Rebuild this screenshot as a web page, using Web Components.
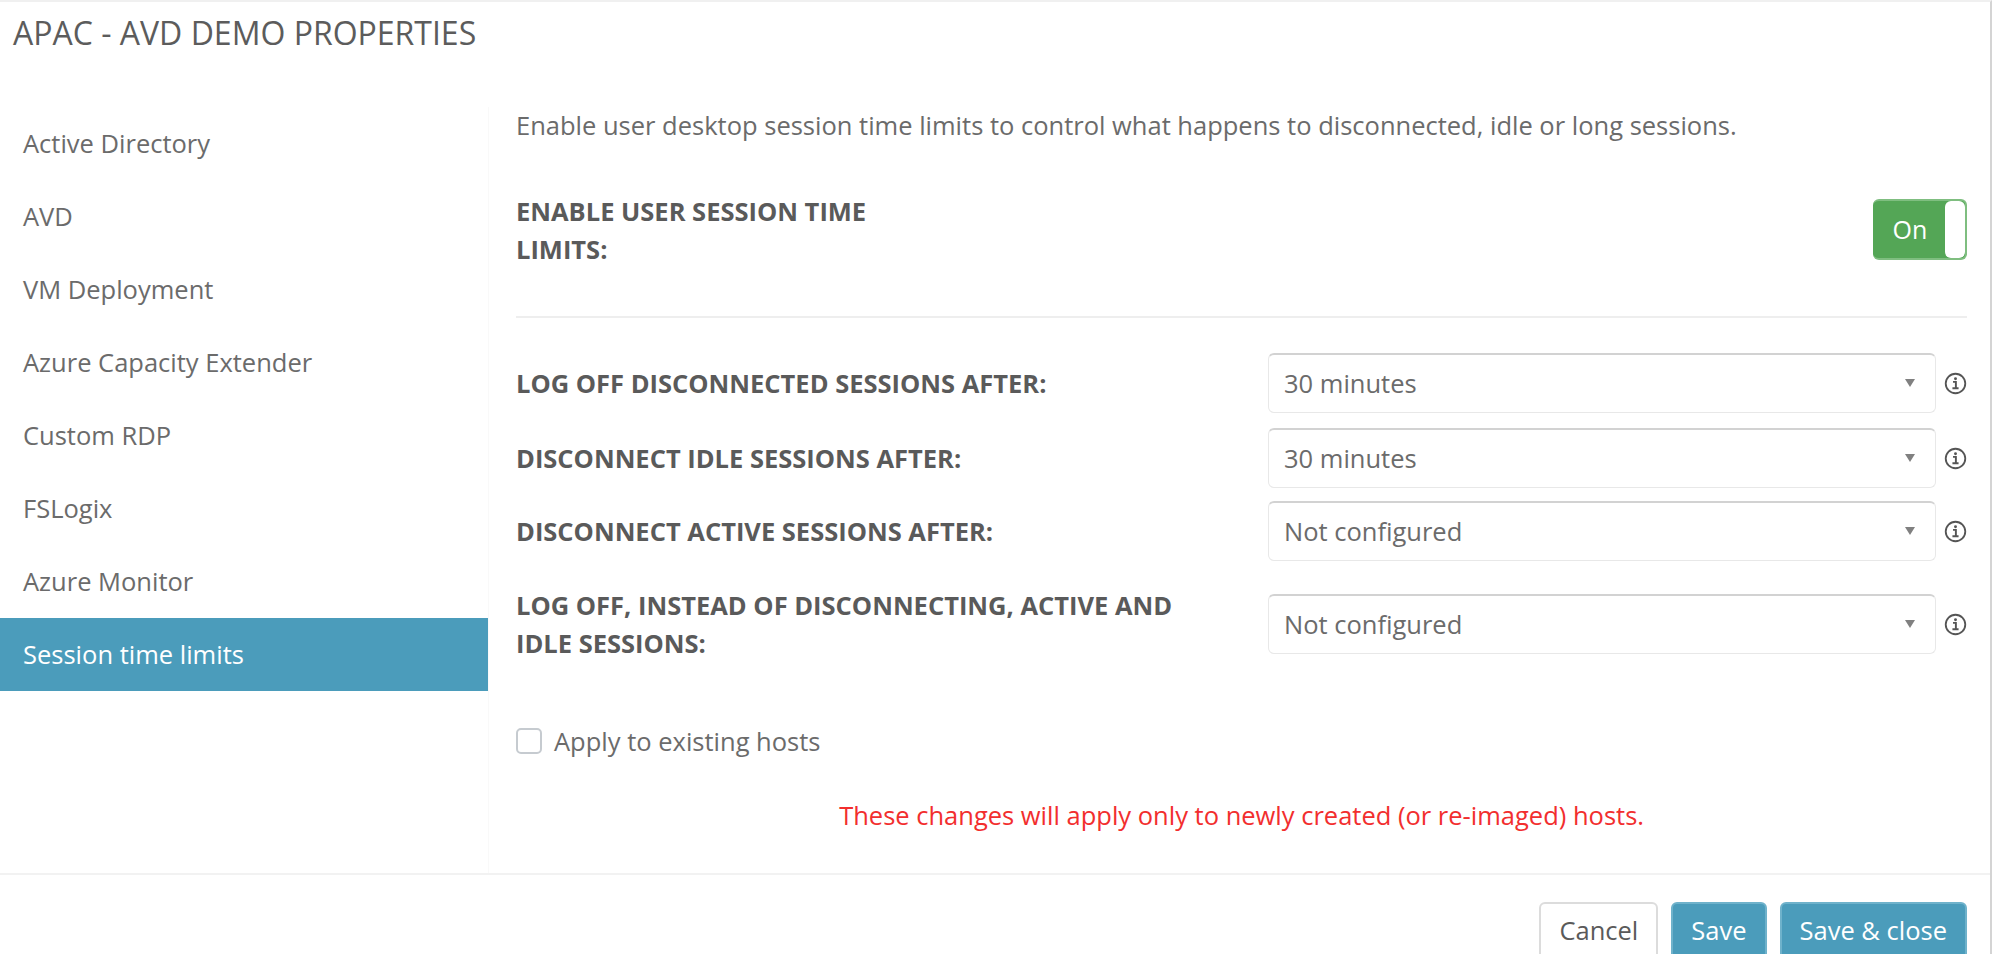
<!DOCTYPE html>
<html>
<head>
<meta charset="utf-8">
<title>APAC - AVD Demo Properties</title>
<style>
    html, body { margin: 0; height: 954px; overflow: hidden; background: #fff; }
    body { font-family: "Open Sans", "Liberation Sans", sans-serif; color: #666; }
</style>
</head>
<body>
<properties-dialog title-text="APAC - AVD Demo Properties">
    <side-nav slot="nav">
        <nav-item>Active Directory</nav-item>
        <nav-item>AVD</nav-item>
        <nav-item>VM Deployment</nav-item>
        <nav-item>Azure Capacity Extender</nav-item>
        <nav-item>Custom RDP</nav-item>
        <nav-item>FSLogix</nav-item>
        <nav-item>Azure Monitor</nav-item>
        <nav-item active>Session time limits</nav-item>
    </side-nav>

    <p-intro>Enable user desktop session time limits to control what happens to disconnected, idle or long sessions.</p-intro>

    <toggle-row>ENABLE USER SESSION TIME<br>LIMITS:</toggle-row>

    <select-row value="30 minutes" style="margin-top:35px">Log off disconnected sessions after:</select-row>
    <select-row value="30 minutes" style="margin-top:15px">Disconnect idle sessions after:</select-row>
    <select-row value="Not configured" style="margin-top:13px">Disconnect active sessions after:</select-row>
    <select-row value="Not configured" style="margin-top:25px">Log off, instead of disconnecting, active and<br>idle sessions:</select-row>

    <check-box>Apply to existing hosts</check-box>
    <warn-note>These changes will apply only to newly created (or re-imaged) hosts.</warn-note>

    <dialog-button slot="footer">Cancel</dialog-button>
    <dialog-button slot="footer" primary>Save</dialog-button>
    <dialog-button slot="footer" primary>Save &amp; close</dialog-button>
</properties-dialog>

<script>
    class PropertiesDialog extends HTMLElement{
        constructor(){
            super();
            this.attachShadow({mode: 'open'});
            this.shadowRoot.innerHTML = '<style>\n'+
            ':host { display: flex; flex-direction: column; height: 954px; box-sizing: border-box; border-top: 2px solid #f0f0f0; border-right: 2px solid #d4d4d4; overflow: hidden; }'+
            '.title { flex: none; margin: 0; height: 105px; box-sizing: border-box; padding: 11px 0 0 13px; font-size: 32px; line-height: 40px; font-weight: 400; text-transform: uppercase; color: #5c5c5c; }'+
            '.body { display: flex; height: 766px; flex: none; }'+
            '.main { flex: 1; min-width: 0; box-sizing: border-box; padding: 0 23px 0 27px; border-left: 1px solid #f9f9f9; }'+
            '.footer { flex: none; display: flex; justify-content: flex-end; gap: 13px; padding: 27px 23px 0 0; border-top: 2px solid #f2f2f2; }'+
            '</style>'+
            '<h1 class="title"></h1>'+
            '<div class="body"><slot name="nav"></slot><div class="main"><slot></slot></div></div>'+
            '<div class="footer"><slot name="footer"></slot></div>';
            this.shadowRoot.querySelector('.title').textContent = this.getAttribute('title-text');
        }
    }
    window.customElements.define('properties-dialog', PropertiesDialog);

    class SideNav extends HTMLElement{
        constructor(){
            super();
            this.attachShadow({mode: 'open'});
            this.shadowRoot.innerHTML = '<style>:host { display: block; flex: none; width: 488px; }</style><slot></slot>';
        }
    }
    window.customElements.define('side-nav', SideNav);

    class NavItem extends HTMLElement{
        constructor(){
            super();
            this.attachShadow({mode: 'open'});
            this.shadowRoot.innerHTML = '<style>\n'+
            ':host { display: flex; align-items: center; height: 73px; box-sizing: border-box; padding: 0 0 2px 23px; font-size: 25.5px; color: #6b6b6b; }'+
            ':host([active]) { background: #4b9cbb; color: #fff; }'+
            '</style><slot></slot>';
        }
    }
    window.customElements.define('nav-item', NavItem);

    class PIntro extends HTMLElement{
        constructor(){
            super();
            this.attachShadow({mode: 'open'});
            this.shadowRoot.innerHTML = '<style>:host { display: block; height: 89px; font-size: 25.5px; line-height: 34px; padding-top: 1px; color: #6b6b6b; box-sizing: border-box; }</style><slot></slot>';
        }
    }
    window.customElements.define('p-intro', PIntro);

    class ToggleRow extends HTMLElement{
        constructor(){
            super();
            this.attachShadow({mode: 'open'});
            this.shadowRoot.innerHTML = '<style>\n'+
            ':host { display: flex; justify-content: space-between; align-items: flex-start; height: 122px; box-sizing: border-box; padding-top: 3px; border-bottom: 2px solid #eee; }'+
            '.label { font-size: 25.5px; line-height: 38px; font-weight: 700; color: #5a5a5a; margin-top: -7px; }'+
            '.switch { display: flex; width: 94px; height: 61px; box-sizing: border-box; border-radius: 6px; background: #54a656; border: 2px solid #7fbe80; border-left: 0; overflow: hidden; }'+
            '.on { flex: 1; display: flex; align-items: center; justify-content: center; padding: 0 0 2px 2px; color: #fff; font-size: 25px; }'+
            '.knob { width: 20px; background: #fff; border-radius: 6px; }'+
            '</style>'+
            '<div class="label"><slot></slot></div>'+
            '<div class="switch"><span class="on">On</span><span class="knob"></span></div>';
        }
    }
    window.customElements.define('toggle-row', ToggleRow);

    class SelectRow extends HTMLElement{
        constructor(){
            super();
            this.attachShadow({mode: 'open'});
            this.shadowRoot.innerHTML = '<style>\n'+
            ':host { display: flex; align-items: center; }'+
            '.label { flex: none; width: 752px; font-size: 25.5px; line-height: 38px; font-weight: 700; text-transform: uppercase; color: #5a5a5a; }'+
            '.select { flex: none; width: 668px; height: 60px; box-sizing: border-box; display: flex; align-items: center; justify-content: space-between; padding: 0 20px 2px 15px; border: 1px solid #e8e8e8; border-top: 2px solid #d2d2d2; border-radius: 6px; font-size: 25.5px; color: #6b6b6b; }'+
            '.arrow { width: 0; height: 0; border-left: 5px solid transparent; border-right: 5px solid transparent; border-top: 8px solid #808080; }'+
            'svg { flex: none; margin-left: 8px; width: 23px; height: 23px; }'+
            '</style>'+
            '<div class="label"><slot></slot></div>'+
            '<div class="select"><span class="val"></span><span class="arrow"></span></div>'+
            '<svg viewBox="0 0 24 24" fill="none" stroke="#555"><circle cx="12" cy="12" r="10.2" stroke-width="1.9"/><path d="M9.4 10.3h3v6.6M8.8 17h6.4" stroke-width="2"/><circle cx="12" cy="7" r="1.5" fill="#555" stroke="none"/></svg>';
            this.shadowRoot.querySelector('.val').textContent = this.getAttribute('value');
        }
    }
    window.customElements.define('select-row', SelectRow);

    class CheckBox extends HTMLElement{
        constructor(){
            super();
            this.attachShadow({mode: 'open'});
            this.shadowRoot.innerHTML = '<style>\n'+
            ':host { display: flex; align-items: center; gap: 12px; margin-top: 66px; height: 26px; font-size: 25.5px; color: #6b6b6b; }'+
            '.box { flex: none; width: 26px; height: 26px; box-sizing: border-box; border: 2px solid #c6cbd0; border-radius: 5px; background: #fff; }'+
            '</style><span class="box"></span><slot></slot>';
        }
    }
    window.customElements.define('check-box', CheckBox);

    class WarnNote extends HTMLElement{
        constructor(){
            super();
            this.attachShadow({mode: 'open'});
            this.shadowRoot.innerHTML = '<style>:host { display: block; margin-top: 44px; padding-right: 323px; text-align: right; font-size: 25.5px; line-height: 34px; color: #f22e2e; }</style><slot></slot>';
        }
    }
    window.customElements.define('warn-note', WarnNote);

    class DialogButton extends HTMLElement{
        constructor(){
            super();
            this.attachShadow({mode: 'open'});
            this.shadowRoot.innerHTML = '<style>\n'+
            ':host { display: flex; align-items: center; box-sizing: border-box; height: 58px; padding: 0 18px 2px; border-radius: 6px; border: 2px solid #dcdcdc; background: #fff; color: #5a5a5a; font-size: 25.5px; }'+
            ':host([primary]) { background: #4b9cbb; border-color: #6fb2cb; color: #fff; padding: 0 18px 2px; }'+
            '</style><slot></slot>';
        }
    }
    window.customElements.define('dialog-button', DialogButton);
</script>
</body>
</html>
